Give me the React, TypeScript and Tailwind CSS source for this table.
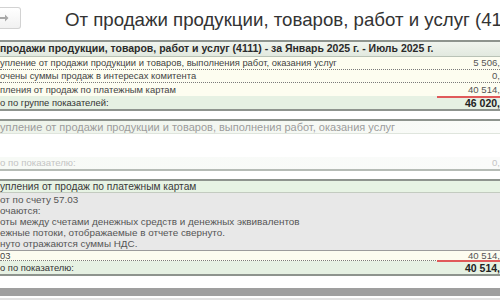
import React from "react";

function Row({
  text,
  value,
  bg = "bg-[#fdfdf0]",
  sep = true,
  red = false,
  h = "h-[13px]",
  boldValue = false,
  dark = false,
}: {
  text: string;
  value?: string;
  bg?: string;
  sep?: boolean;
  red?: boolean;
  h?: string;
  boldValue?: boolean;
  dark?: boolean;
}) {
  return (
    <div
      className={`relative flex items-center justify-between ${h} ${bg} ${
        sep ? "border-b border-dotted border-[#7a7a7a]" : ""
      } whitespace-nowrap`}
    >
      <span className={`text-[9.4px] leading-[10px] ${dark ? "text-[#333]" : "text-[#444]"}`}>{text}</span>
      {value && (
        <span
          className={
            boldValue
              ? "text-[10.5px] leading-[10px] font-bold text-[#222]"
              : "text-[9.6px] leading-[10px] text-[#555]"
          }
        >
          {value}
        </span>
      )}
      {red && <div className="absolute z-10 right-0 bottom-[-2px] w-[63px] h-[2px] bg-[#e05a5a]" />}
    </div>
  );
}

export default function App() {
  return (
    <div className="w-[500px] h-[300px] overflow-hidden bg-white font-['Liberation_Sans',Arial,sans-serif] flex flex-col">
      {/* title bar */}
      <div className="h-[40px] flex items-start shrink-0">
        <div className="shrink-0 mt-[7px] w-[21px] h-[22px] rounded-r-[3px] border border-l-0 border-[#d2d2d2] bg-gradient-to-b from-white to-[#f1f1f1] flex items-center pl-[0px]">
          <svg width="9" height="8" viewBox="0 0 9 8">
            <path d="M0 3h5V0.5L8.5 4 5 7.5V5H0z" fill="#a8a8a8" />
          </svg>
        </div>
        <div className="ml-[44px] mt-[9px] text-[18.67px] leading-[22px] text-[#333] whitespace-nowrap">
          От продажи продукции, товаров, работ и услуг (4111)
        </div>
      </div>

      {/* block 1 */}
      <div className="border-t-2 border-b-2 border-[#8e948e] shrink-0">
        <div className="h-[15px] flex items-center bg-gradient-to-b from-[#f0f4ee] to-[#e2e9df] border-b border-[#b9c2b6] text-[10.5px] font-bold text-[#2a2a2a] whitespace-nowrap">
          продажи продукции, товаров, работ и услуг (4111) - за Январь 2025 г. - Июль 2025 г.
        </div>
        <Row text="упление от продажи продукции и товаров, выполнения работ, оказания услуг" value="5 506," />
        <Row text="очены суммы продаж в интересах комитента" value="0," />
        <Row text="пления от продаж по платежным картам" value="40 514," red sep={false} />
        <Row text="о по группе показателей:" value="46 020," boldValue dark bg="bg-[#e6f1e3]" sep={false} />
      </div>

      <div className="h-[8px] shrink-0" />

      {/* block 2 (faded) */}
      <div className="border-t-2 border-b-2 border-t-[#8e948e] border-b-[#b6bcb6] shrink-0">
        <div className="h-[13px] flex items-center bg-gradient-to-r from-[#edf3ea] to-[#fbfcfa] border-b border-[#dfe5dd] text-[11px] text-[#9c9c9c] whitespace-nowrap">
          упление от продажи продукции и товаров, выполнения работ, оказания услуг
        </div>
        <div className="h-[23px] bg-white" />
        <div className="h-[12px] flex items-center justify-between bg-gradient-to-r from-[#f7faf6] to-[#fafbfa] text-[9.6px] text-[#c4c4c4] whitespace-nowrap">
          <span>о по показателю:</span>
          <span>0,</span>
        </div>
      </div>

      <div className="h-[8px] shrink-0" />

      {/* block 3 */}
      <div className="border-t-2 border-b-2 border-[#8e948e] shrink-0">
        <div className="h-[12px] flex items-center bg-[#e7f3e4] border-b border-[#c3cbc0] text-[10.2px] text-[#3a3a3a] whitespace-nowrap">
          упления от продаж по платежным картам
        </div>
        <div className="bg-[#e8e8e8] pt-[1px] pb-[1px] border-b border-[#9c9c9c] text-[9.9px] leading-[11px] text-[#555] whitespace-nowrap">
          <div>от по счету 57.03</div>
          <div>очаются:</div>
          <div>оты между счетами денежных средств и денежных эквивалентов</div>
          <div>ежные потоки, отображаемые в отчете свернуто.</div>
          <div>нуто отражаются суммы НДС.</div>
        </div>
        <Row text="03" value="40 514," h="h-[10px]" red />
        <Row text="о по показателю:" value="40 514," boldValue dark bg="bg-[#e6f1e3]" sep={false} />
      </div>

      <div className="h-[12px] shrink-0" />
      <div className="h-[8px] bg-[#9f9f9f] shrink-0" />
      <div className="h-[2px] bg-white shrink-0" />
      <div className="flex-1 bg-[#e2e2e2]" />
    </div>
  );
}
